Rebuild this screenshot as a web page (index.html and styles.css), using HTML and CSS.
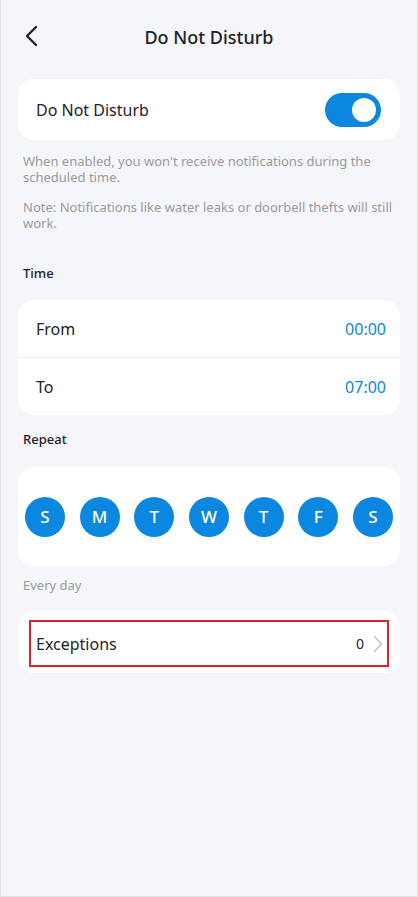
FILE: index.html
```html
<!DOCTYPE html>
<html lang="en">

<head>
  <meta charset="UTF-8">
  <meta name="viewport" content="width=device-width, initial-scale=1.0">
  <title>Do Not Disturb</title>
  <link rel="stylesheet" href="styles.css">
</head>

<body>
  <div class="screen">
    <header class="top-bar">
      <button class="back-btn" aria-label="Back">
        <svg width="14" height="22" viewBox="0 0 14 22">
          <path d="M12 2 L3 11 L12 20" fill="none" stroke="#222" stroke-width="2.4" stroke-linecap="round" stroke-linejoin="round" />
        </svg>
      </button>
      <h1>Do Not Disturb</h1>
    </header>

    <div class="card row main-switch">
      <span class="row-label">Do Not Disturb</span>
      <span class="toggle on"><span class="knob"></span></span>
    </div>

    <p class="hint first">When enabled, you won't receive notifications during the scheduled time.</p>
    <p class="hint">Note: Notifications like water leaks or doorbell thefts will still work.</p>

    <div class="section-title time-title">Time</div>
    <div class="card">
      <div class="row time-row">
        <span class="row-label">From</span>
        <span class="time-value">00:00</span>
      </div>
      <div class="row time-row">
        <span class="row-label">To</span>
        <span class="time-value">07:00</span>
      </div>
    </div>

    <div class="section-title repeat-title">Repeat</div>
    <div class="card days">
      <span class="day">S</span>
      <span class="day">M</span>
      <span class="day">T</span>
      <span class="day">W</span>
      <span class="day">T</span>
      <span class="day">F</span>
      <span class="day">S</span>
    </div>
    <p class="hint every">Every day</p>

    <div class="card exceptions">
      <div class="row exception-row">
        <span class="row-label">Exceptions</span>
        <span class="count">0</span>
        <svg class="chevron" width="10" height="18" viewBox="0 0 10 18">
          <path d="M1.5 1.5 L8.5 9 L1.5 16.5" fill="none" stroke="#c4c4c4" stroke-width="1.5" stroke-linecap="round" stroke-linejoin="round" />
        </svg>
      </div>
    </div>
  </div>
</body>

</html>
```

FILE: styles.css
```css
html,
body {
  margin: 0;
  padding: 0;
}

body {
  font-family: "Noto Sans", Arial, sans-serif;
  background-color: #f5f6fa;
  color: #222;
}

.screen {
  box-sizing: border-box;
  height: 897px;
  border: 1px solid #e2e3e8;
  border-top: none;
  padding: 0 17px 0 17px;
}

.top-bar {
  position: relative;
  height: 74px;
  display: flex;
  align-items: center;
  justify-content: center;
}

.top-bar h1 {
  margin: 0;
  font-size: 18px;
  font-weight: 500;
  color: #222;
}

.back-btn {
  position: absolute;
  left: 6px;
  top: 25px;
  background: none;
  border: none;
  padding: 0;
  cursor: pointer;
}

.card {
  background-color: #ffffff;
  border-radius: 16px;
}

.row {
  display: flex;
  align-items: center;
  justify-content: space-between;
  padding: 0 14px 0 18px;
}

.row-label {
  font-size: 16px;
  color: #222;
}

.main-switch {
  margin-top: 5px;
  height: 61px;
  padding-right: 19px;
}

.toggle {
  width: 56px;
  height: 34px;
  border-radius: 17px;
  background-color: #0b87df;
  display: flex;
  align-items: center;
  justify-content: flex-end;
  padding-right: 5px;
  box-sizing: border-box;
}

.knob {
  width: 24px;
  height: 24px;
  border-radius: 50%;
  background-color: #ffffff;
}

.hint {
  margin: 0;
  padding: 0 5px;
  font-size: 13px;
  line-height: 16px;
  color: #9a9a9a;
}

.hint.first {
  margin-top: 13px;
  margin-bottom: 14px;
}

.section-title {
  padding: 0 5px;
  font-size: 13px;
  font-weight: 500;
  color: #222;
}

.time-title {
  margin-top: 33px;
  margin-bottom: 18px;
}

.time-row {
  height: 57px;
}

.time-row + .time-row {
  border-top: 1px solid #eeeff2;
}

.time-value {
  font-size: 16px;
  color: #0b87df;
}

.repeat-title {
  margin-top: 15px;
  margin-bottom: 19px;
}

.days {
  height: 99px;
  display: flex;
  align-items: center;
  justify-content: space-between;
  padding: 0 7px;
}

.day {
  width: 40px;
  height: 40px;
  border-radius: 50%;
  background-color: #0b87df;
  color: #ffffff;
  font-size: 17px;
  font-weight: 500;
  display: flex;
  align-items: center;
  justify-content: center;
}

.hint.every {
  margin-top: 11px;
}

.exceptions {
  margin-top: 18px;
  padding: 9px 11px 6px 11px;
}

.exception-row {
  height: 43px;
  border: 2px solid #e3202a;
  padding: 0 4px 0 5px;
  justify-content: flex-start;
}

.exception-row .row-label {
  flex: 1;
}

.count {
  font-size: 14px;
  color: #222;
  margin-right: 9px;
}
```
